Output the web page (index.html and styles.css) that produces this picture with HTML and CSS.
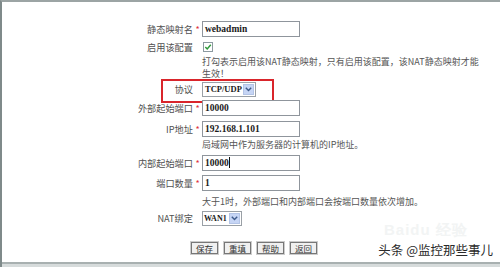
FILE: index.html
```html
<!DOCTYPE html>
<html lang="zh">
<head>
<meta charset="utf-8">
<title>NAT静态映射</title>
<link rel="stylesheet" href="styles.css">
</head>
<body>
<div class="frame">
  <div class="main">
    <div class="form">
      <div class="row r1">
        <span class="label">静态映射名</span><span class="req">*</span>
        <span class="box">webadmin</span>
      </div>
      <div class="row r2">
        <span class="label">启用该配置</span><span class="req"></span>
        <span class="check"><svg width="10" height="10" viewBox="0 0 10 10"><rect x="0.5" y="0.5" width="9" height="9" fill="#fff" stroke="#8c9aa0"/><path d="M2.3 5 L4.2 7 L7.8 2.8" fill="none" stroke="#2f9a3a" stroke-width="1.5"/></svg></span>
      </div>
      <div class="row r3">
        <span class="label"></span><span class="req"></span>
        <span class="help">打勾表示启用该NAT静态映射，只有启用该配置，该NAT静态映射才能<br>生效！</span>
      </div>
      <div class="row r4 marked">
        <span class="label">协议</span><span class="req"></span>
        <span class="select sel-proto"><span class="sel-text">TCP/UDP</span><span class="sel-btn"><svg width="7" height="5" viewBox="0 0 7 5"><path d="M0.8 0.8 L3.5 3.6 L6.2 0.8" fill="none" stroke="#3d5a8a" stroke-width="1.4"/></svg></span></span>
      </div>
      <div class="row r5">
        <span class="label">外部起始端口</span><span class="req">*</span>
        <span class="box">10000</span>
      </div>
      <div class="row r6">
        <span class="label">IP地址</span><span class="req">*</span>
        <span class="box">192.168.1.101</span>
      </div>
      <div class="row r7">
        <span class="label"></span><span class="req"></span>
        <span class="help">局域网中作为服务器的计算机的IP地址。</span>
      </div>
      <div class="row r8">
        <span class="label">内部起始端口</span><span class="req">*</span>
        <span class="box">10000<span class="caret"></span></span>
      </div>
      <div class="row r9">
        <span class="label">端口数量</span><span class="req">*</span>
        <span class="box">1</span>
      </div>
      <div class="row r10">
        <span class="label"></span><span class="req"></span>
        <span class="help">大于1时，外部端口和内部端口会按端口数量依次增加。</span>
      </div>
      <div class="row r11">
        <span class="label">NAT绑定</span><span class="req"></span>
        <span class="select sel-wan"><span class="sel-text">WAN1</span><span class="sel-btn"><svg width="7" height="5" viewBox="0 0 7 5"><path d="M0.8 0.8 L3.5 3.6 L6.2 0.8" fill="none" stroke="#3d5a8a" stroke-width="1.4"/></svg></span></span>
      </div>
    </div>
    <div class="buttons">
      <span class="btn">保存</span>
      <span class="btn">重填</span>
      <span class="btn">帮助</span>
      <span class="btn">返回</span>
    </div>
    <div class="baidu">Baidu 经验</div>
    <div class="watermark">头条 @监控那些事儿</div>
  </div>
  <div class="band"></div>
</div>
</body>
</html>
```
FILE: styles.css
```css
* { box-sizing: border-box; }
html, body { margin: 0; padding: 0; background: #fff; }
body { font-family: "Noto Sans CJK SC", "Noto Sans", sans-serif; }

.frame {
  width: 500px;
  height: 267px;
  display: flex;
  flex-direction: column;
  border-top: 2px solid #9ca4a4;
  border-left: 2px solid #7f8a8a;
  overflow: hidden;
}
.main {
  flex: 1;
  position: relative;
  background: #fff;
  padding-top: 18px;
}
.band {
  height: 5px;
  border-top: 2px solid #a8b0b0;
  background: #d6dbdb;
}

.form { display: flex; flex-direction: column; }
.row {
  display: flex;
  align-items: center;
  position: relative;
}
.label {
  width: 191px;
  text-align: right;
  font-size: 9.2px;
  color: #505050;
  line-height: 12px;
  white-space: nowrap;
}
.req {
  width: 9px;
  text-align: center;
  color: #e0303a;
  font-size: 9px;
  line-height: 10px;
  padding-top: 2px;
}
.r1 { height: 17px; }
.r2 { height: 19px; }
.r3 { height: 24px; align-items: flex-start; }
.r4 { height: 18px; }
.r5 { height: 20px; }
.r6 { height: 22px; }
.r7 { height: 10px; }
.r8 { height: 26px; }
.r9 { height: 14px; }
.r10 { height: 24px; }
.r11 { height: 8px; }

.box {
  flex: none;
  width: 98px;
  height: 16px;
  border: 1px solid #8f959c;
  background: #fff;
  font-family: "Liberation Serif", serif;
  font-weight: bold;
  font-size: 9.5px;
  line-height: 14px;
  padding-left: 2px;
  color: #1a1a1a;
}
.caret {
  display: inline-block;
  width: 1px;
  height: 11px;
  background: #111;
  vertical-align: -2px;
}
.check { display: flex; padding-left: 1px; }
.check svg { display: block; }

.help {
  font-size: 9px;
  line-height: 12px;
  color: #555;
  white-space: nowrap;
}

.select {
  flex: none;
  display: flex;
  align-items: center;
  height: 15px;
  border: 1px solid #9aa0a6;
  background: #fff;
}
.sel-proto { width: 54px; }
.sel-wan { width: 40px; }
.sel-text {
  flex: 1;
  font-family: "Liberation Serif", serif;
  font-weight: bold;
  font-size: 8.5px;
  line-height: 13px;
  padding-left: 2px;
  color: #1a1a1a;
  white-space: nowrap;
  overflow: hidden;
}
.sel-wan .sel-text { font-size: 8px; padding-left: 1px; }
.sel-btn {
  flex: none;
  width: 11px;
  height: 11px;
  margin-right: 1px;
  background: #c6d5f5;
  border: 1px solid #b3c4e6;
  display: flex;
  align-items: center;
  justify-content: center;
}
.sel-btn svg { display: block; }

.marked::after {
  content: "";
  position: absolute;
  left: 159px;
  top: -1px;
  width: 109px;
  height: 20px;
  border: 2px solid #d9252b;
}

.buttons {
  display: flex;
  gap: 6px;
  padding-left: 189px;
  margin-top: 20px;
}
.btn {
  width: 27px;
  height: 12px;
  border: 1px solid #777;
  outline: 1px solid #ccc;
  background: #f0f0f0;
  font-size: 8.5px;
  line-height: 10px;
  text-align: center;
  color: #333;
}

.baidu {
  position: absolute;
  left: 382px;
  top: 220px;
  font-family: "Liberation Sans", sans-serif;
  font-size: 15px;
  line-height: 16px;
  font-weight: bold;
  color: #f2f4f4;
  letter-spacing: 1px;
  white-space: nowrap;
}
.watermark {
  position: absolute;
  right: 7px;
  bottom: 4px;
  font-size: 12.5px;
  line-height: 16px;
  color: #2a2a2a;
  white-space: nowrap;
}
```
